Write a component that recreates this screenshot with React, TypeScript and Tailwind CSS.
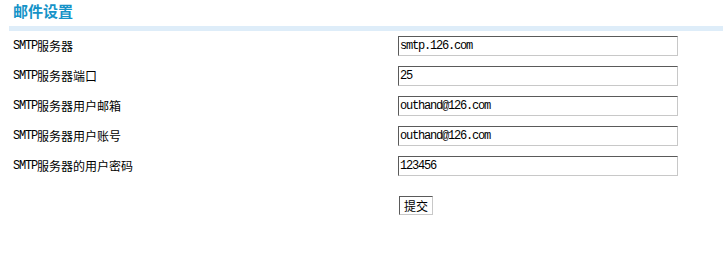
import React from "react";

const fields = [
  { label: "服务器", value: "smtp.126.com" },
  { label: "服务器端口", value: "25" },
  { label: "服务器用户邮箱", value: "outhand@126.com" },
  { label: "服务器用户账号", value: "outhand@126.com" },
  { label: "服务器的用户密码", value: "123456" },
];

const App = () => {
  return (
    <div className="w-[723px] h-[253px] bg-white text-black font-['Noto_Sans_CJK_SC',sans-serif]">
      <div className="h-[26px] pl-[13px] pt-[1px] text-[15px] leading-[20px] font-bold text-[#1593c8]">
        邮件设置
      </div>
      <div className="ml-[9px] h-[5px] bg-[#deedf9]" />
      <div className="mt-[5px] flex flex-col">
        {fields.map((f) => (
          <div key={f.label} className="flex h-[30px] items-start">
            <div className="w-[398px] pl-[13px] h-[20px] flex items-center text-[12px] leading-[14px]">
              <span className="font-['Liberation_Mono',monospace] tracking-[-1.2px]">SMTP</span>
              <span>{f.label}</span>
            </div>
            <input
              readOnly
              value={f.value}
              className="w-[280px] h-[20px] border border-t-[#5a5a5a] border-l-[#5a5a5a] border-b-[#c8c8c8] border-r-[#c8c8c8] px-[1px] text-[12px] font-['Liberation_Mono',monospace] tracking-[-1.2px] outline-none"
            />
          </div>
        ))}
      </div>
      <div className="flex pl-[399px] mt-[10px]">
        <button className="w-[34px] h-[19px] border border-t-[#5a5a5a] border-l-[#5a5a5a] border-b-[#c8c8c8] border-r-[#c8c8c8] bg-white text-[12px] leading-[16px]">
          提交
        </button>
      </div>
    </div>
  );
};

export default App;
